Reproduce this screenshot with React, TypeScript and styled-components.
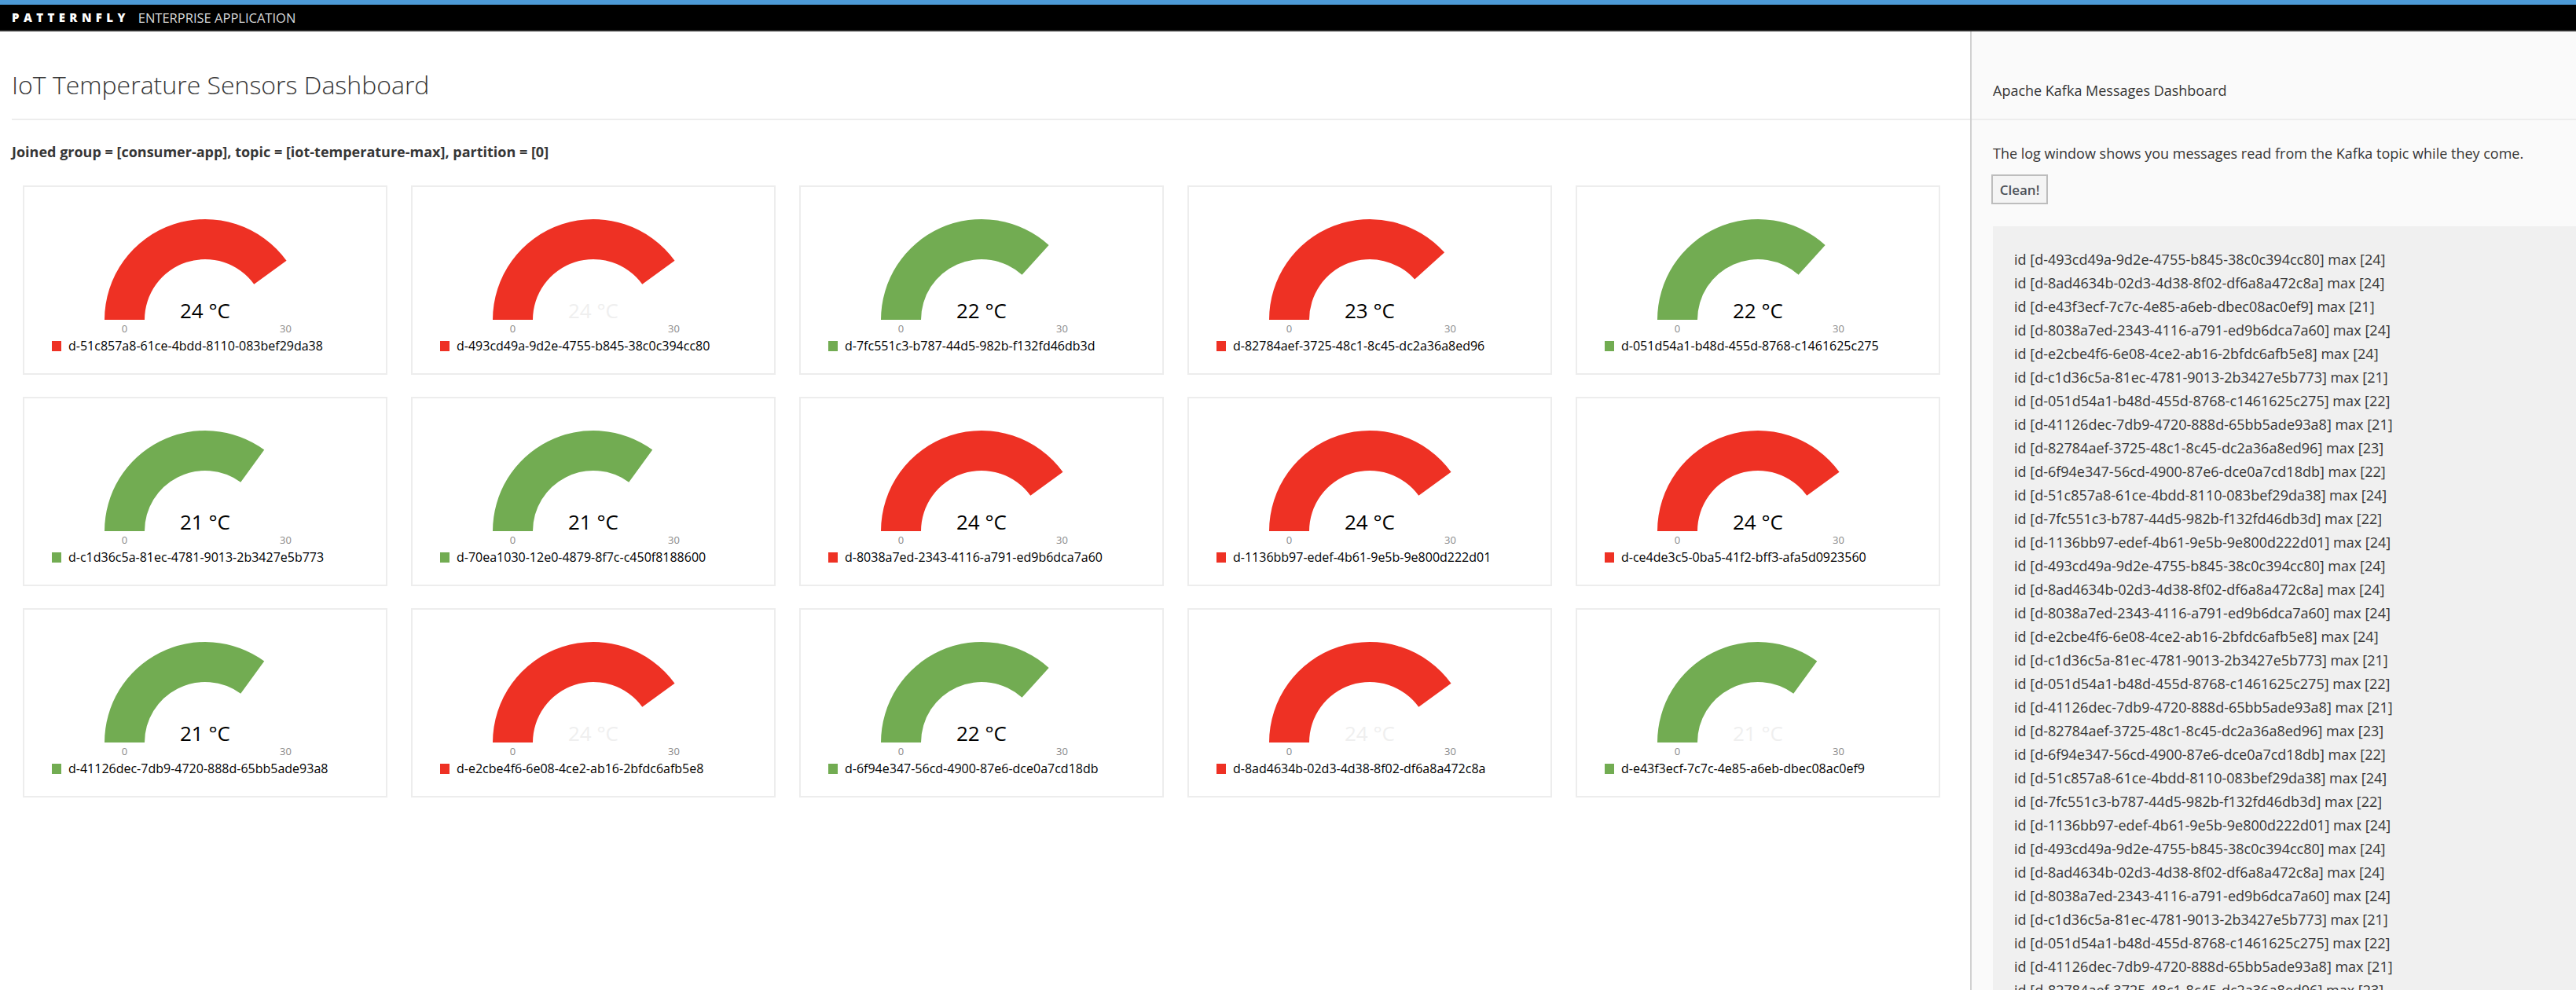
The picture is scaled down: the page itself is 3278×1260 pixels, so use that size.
import React from "react";
import styled, { createGlobalStyle } from "styled-components";

const GlobalStyle = createGlobalStyle`
  html, body {
    margin: 0;
    padding: 0;
    background: #fff;
    font-family: "Open Sans", "Noto Sans", sans-serif;
    color: #363636;
  }
`;

type Sensor = { id: string; value: number; faded?: boolean };

const SENSORS: Sensor[] = [
  { id: "d-51c857a8-61ce-4bdd-8110-083bef29da38", value: 24 },
  { id: "d-493cd49a-9d2e-4755-b845-38c0c394cc80", value: 24, faded: true },
  { id: "d-7fc551c3-b787-44d5-982b-f132fd46db3d", value: 22 },
  { id: "d-82784aef-3725-48c1-8c45-dc2a36a8ed96", value: 23 },
  { id: "d-051d54a1-b48d-455d-8768-c1461625c275", value: 22 },
  { id: "d-c1d36c5a-81ec-4781-9013-2b3427e5b773", value: 21 },
  { id: "d-70ea1030-12e0-4879-8f7c-c450f8188600", value: 21 },
  { id: "d-8038a7ed-2343-4116-a791-ed9b6dca7a60", value: 24 },
  { id: "d-1136bb97-edef-4b61-9e5b-9e800d222d01", value: 24 },
  { id: "d-ce4de3c5-0ba5-41f2-bff3-afa5d0923560", value: 24 },
  { id: "d-41126dec-7db9-4720-888d-65bb5ade93a8", value: 21 },
  { id: "d-e2cbe4f6-6e08-4ce2-ab16-2bfdc6afb5e8", value: 24, faded: true },
  { id: "d-6f94e347-56cd-4900-87e6-dce0a7cd18db", value: 22 },
  { id: "d-8ad4634b-02d3-4d38-8f02-df6a8a472c8a", value: 24, faded: true },
  { id: "d-e43f3ecf-7c7c-4e85-a6eb-dbec08ac0ef9", value: 21, faded: true },
];

// order in which the messages arrived in the log window
const LOG_ORDER = [
  "493cd49a", "8ad4634b", "e43f3ecf", "8038a7ed", "e2cbe4f6", "c1d36c5a",
  "051d54a1", "41126dec", "82784aef", "6f94e347", "51c857a8", "7fc551c3",
  "1136bb97", "493cd49a", "8ad4634b", "8038a7ed", "e2cbe4f6", "c1d36c5a",
  "051d54a1", "41126dec", "82784aef", "6f94e347", "51c857a8", "7fc551c3",
  "1136bb97", "493cd49a", "8ad4634b", "8038a7ed", "c1d36c5a", "051d54a1",
  "41126dec", "82784aef",
];

const RED = "#ee3124";
const GREEN = "#72ac52";

const Gauge = ({ value, faded }: { value: number; faded?: boolean }) => {
  const cx = 150;
  const cy = 131;
  const R = 128;
  const r = 77;
  const phi = (Math.PI * value) / 30;
  const ox = cx - R * Math.cos(phi);
  const oy = cy - R * Math.sin(phi);
  const ix = cx - r * Math.cos(phi);
  const iy = cy - r * Math.sin(phi);
  const d = `M ${cx - R} ${cy} A ${R} ${R} 0 0 1 ${ox} ${oy} L ${ix} ${iy} A ${r} ${r} 0 0 0 ${cx - r} ${cy} Z`;
  return (
    <svg width="300" height="154" viewBox="0 0 300 154">
      <path d={d} fill={value >= 23 ? RED : GREEN} />
      <text
        x={cx}
        y={cy - 2}
        textAnchor="middle"
        fontSize="26"
        fontFamily="Open Sans, sans-serif"
        fill={faded ? "#efefef" : "#000"}
      >
        {value} °C
      </text>
      <text x={cx - 102.5} y={cy + 16} textAnchor="middle" fontSize="13" fill="#8a8a8a" fontFamily="Open Sans, sans-serif">
        0
      </text>
      <text x={cx + 102.5} y={cy + 16} textAnchor="middle" fontSize="13" fill="#8a8a8a" fontFamily="Open Sans, sans-serif">
        30
      </text>
    </svg>
  );
};

const App = () => {
  return (
    <>
      <GlobalStyle />
      <Page>
        <Navbar>
          <Brand>PATTERNFLY</Brand>
          <BrandSub>ENTERPRISE APPLICATION</BrandSub>
        </Navbar>
        <Body>
          <Main>
            <PageHeader>
              <Title>IoT Temperature Sensors Dashboard</Title>
            </PageHeader>
            <Joined>Joined group = [consumer-app], topic = [iot-temperature-max], partition = [0]</Joined>
            <CardGrid>
              {SENSORS.map((s) => (
                <Card key={s.id}>
                  <Gauge value={s.value} faded={s.faded} />
                  <Legend>
                    <Swatch color={s.value >= 23 ? RED : GREEN} />
                    <LegendText>{s.id}</LegendText>
                  </Legend>
                </Card>
              ))}
            </CardGrid>
          </Main>
          <Sidebar>
            <SideHeader>
              <SideTitle>Apache Kafka Messages Dashboard</SideTitle>
            </SideHeader>
            <SideText>The log window shows you messages read from the Kafka topic while they come.</SideText>
            <CleanButton>Clean!</CleanButton>
            <LogBox>
              {LOG_ORDER.map((key, i) => {
                const s = SENSORS.find((x) => x.id.startsWith("d-" + key))!;
                return (
                  <LogLine key={i}>
                    id [{s.id}] max [{s.value}]
                  </LogLine>
                );
              })}
            </LogBox>
          </Sidebar>
        </Body>
      </Page>
    </>
  );
};

const Page = styled.div`
  height: 100vh;
  display: flex;
  flex-direction: column;
  overflow: hidden;
`;

const Navbar = styled.div`
  height: 32px;
  flex-shrink: 0;
  background: #000;
  border-top: 6px solid #4d9ad6;
  border-bottom: 2px solid #2b2b2b;
  display: flex;
  align-items: center;
  padding-left: 15px;
  gap: 11px;
`;

const Brand = styled.span`
  color: #fff;
  font-size: 15px;
  font-weight: 800;
  letter-spacing: 5.4px;
`;

const BrandSub = styled.span`
  color: #d8d8d8;
  font-size: 16.5px;
  font-weight: 400;
`;

const Body = styled.div`
  flex: 1;
  display: flex;
  min-height: 0;
`;

const Main = styled.div`
  width: 2507px;
  flex-shrink: 0;
  padding-left: 15px;
  box-sizing: border-box;
`;

const PageHeader = styled.div`
  height: 113px;
  box-sizing: border-box;
  display: flex;
  align-items: flex-end;
  padding-bottom: 26px;
  border-bottom: 2px solid #ededed;
`;

const Title = styled.h1`
  margin: 0;
  font-size: 32px;
  line-height: 34px;
  font-weight: 300;
  color: #363636;
`;

const Joined = styled.div`
  margin-top: 28px;
  font-size: 18px;
  line-height: 24px;
  font-weight: 700;
  color: #363636;
`;

const CardGrid = styled.div`
  margin-top: 31px;
  margin-left: 14px;
  display: grid;
  grid-template-columns: repeat(5, 464px);
  column-gap: 30px;
  row-gap: 28px;
`;

const Card = styled.div`
  height: 241px;
  box-sizing: border-box;
  border: 2px solid #ededed;
  padding-top: 38px;
  display: flex;
  flex-direction: column;
  align-items: center;
`;

const Legend = styled.div`
  align-self: flex-start;
  margin-left: 35px;
  height: 20px;
  display: flex;
  align-items: center;
  gap: 9px;
`;

const Swatch = styled.span<{ color: string }>`
  width: 12px;
  height: 13px;
  background: ${(p) => p.color};
`;

const LegendText = styled.span`
  font-size: 16px;
  color: #000;
`;

const Sidebar = styled.div`
  flex: 1;
  background: #fafafa;
  border-left: 2px solid #d1d1d1;
  padding-left: 27px;
  overflow: hidden;
`;

const SideHeader = styled.div`
  height: 113px;
  box-sizing: border-box;
  display: flex;
  align-items: flex-end;
  padding-bottom: 24px;
  border-bottom: 2px solid #ededed;
  margin-left: -27px;
  padding-left: 27px;
`;

const SideTitle = styled.div`
  font-size: 18px;
  line-height: 24px;
  color: #363636;
`;

const SideText = styled.p`
  margin: 30px 0 0;
  font-size: 18px;
  line-height: 24px;
  color: #363636;
`;

const CleanButton = styled.button`
  margin-top: 15px;
  margin-left: -2px;
  height: 38px;
  width: 72px;
  padding: 0;
  border: 2px solid #bdbdbd;
  background: #f4f4f4;
  font-family: "Open Sans", sans-serif;
  font-size: 17px;
  font-weight: 600;
  color: #4d5258;
`;

const LogBox = styled.div`
  margin-top: 28px;
  background: #f0f0f0;
  padding: 27px 0 0 27px;
`;

const LogLine = styled.div`
  font-size: 18px;
  line-height: 30px;
  color: #363636;
  white-space: nowrap;
`;

export default App;
